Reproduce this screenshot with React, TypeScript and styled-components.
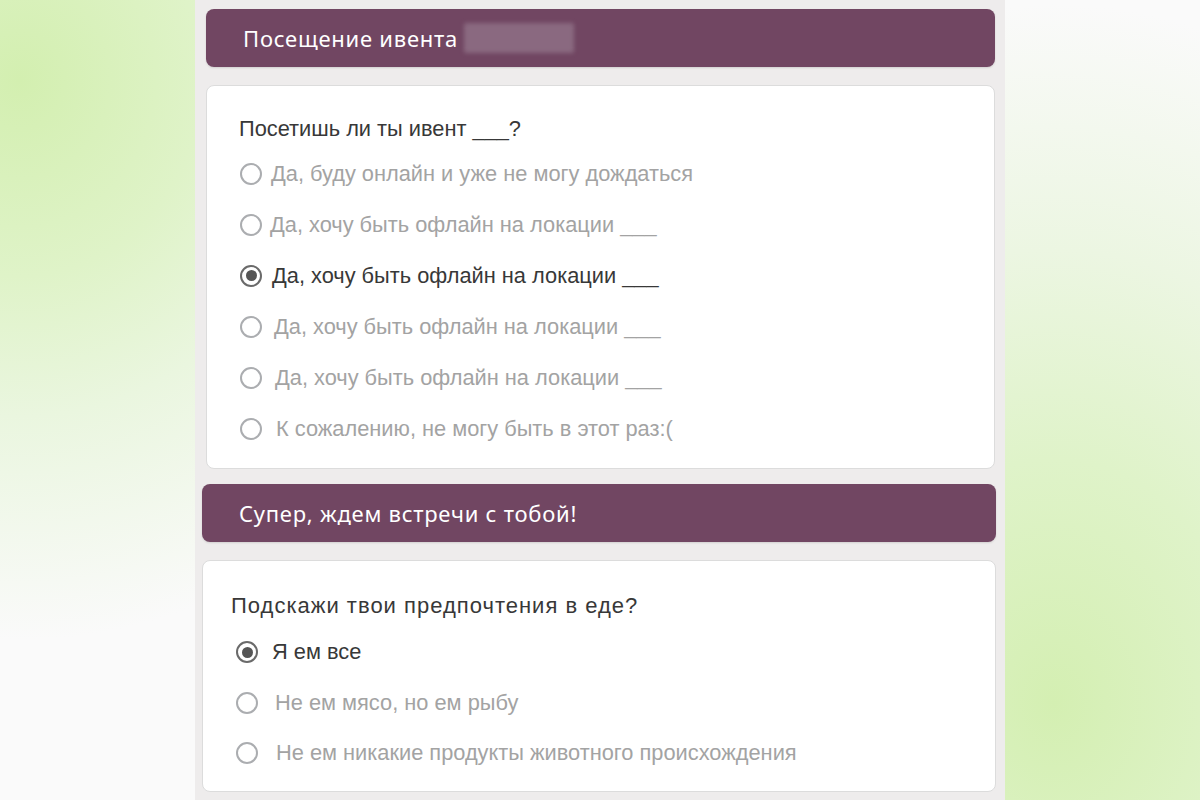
import React from "react";
import styled, { createGlobalStyle } from "styled-components";

const Global = createGlobalStyle`
  html, body { margin: 0; padding: 0; }
  body {
    width: 1200px;
    height: 800px;
    overflow: hidden;
    font-family: "Liberation Sans", Arial, sans-serif;
    background: #fafafa;
  }
`;

const Page = styled.div`
  display: grid;
  grid-template-columns: 195px 810px 1fr;
  height: 800px;
`;

const SideLeft = styled.div`
  background:
    radial-gradient(ellipse 520px 560px at 10% 10%, #d3efb0 0%, #dff3c8 35%, #eaf6df 60%, rgba(250, 250, 250, 0) 100%),
    #fafafa;
`;

const SideRight = styled.div`
  background:
    radial-gradient(ellipse 560px 700px at 25% 88%, #d4efb2 0%, #dff3c9 35%, #ecf6e2 65%, rgba(250, 250, 250, 0) 100%),
    #fafafa;
`;

const Column = styled.main`
  background: #eeecec;
  display: flex;
  flex-direction: column;
  padding-top: 9px;
`;

const Banner = styled.div<{ $left: number; $right: number; $mt: number }>`
  margin: ${(p) => p.$mt}px ${(p) => p.$right}px 0 ${(p) => p.$left}px;
  height: 58px;
  background: #714662;
  border-radius: 8px;
  box-shadow: 0 1px 2px rgba(0, 0, 0, 0.12);
  display: flex;
  align-items: center;
  padding-left: 37px;
  color: #ffffff;
  font-family: "Noto Sans", "Open Sans", sans-serif;
  font-size: 22px;
  letter-spacing: 0.75px;
`;

const Blurred = styled.span`
  display: inline-block;
  width: 110px;
  height: 30px;
  margin-left: 6px;
  background: #8a6980;
  filter: blur(2px);
  border-radius: 2px;
`;

const Card = styled.section<{ $left: number; $right: number; $mt: number; $h: number; $pt: number; $pl: number }>`
  margin: ${(p) => p.$mt}px ${(p) => p.$right}px 0 ${(p) => p.$left}px;
  height: ${(p) => p.$h}px;
  box-sizing: border-box;
  background: #ffffff;
  border: 1px solid #dcdcdc;
  border-radius: 8px;
  padding: ${(p) => p.$pt}px 0 0 ${(p) => p.$pl}px;
  display: flex;
  flex-direction: column;
`;

const Question = styled.div<{ $gap: number; $size: number; $spacing: number }>`
  font-size: ${(p) => p.$size}px;
  letter-spacing: ${(p) => p.$spacing}px;
  line-height: 26px;
  color: #383838;
  margin-bottom: ${(p) => p.$gap}px;
`;

const Option = styled.label<{ $row: number; $indent: number; $textGap: number; $selected: boolean }>`
  display: flex;
  align-items: center;
  height: ${(p) => p.$row}px;
  padding-left: ${(p) => p.$indent}px;
  gap: ${(p) => p.$textGap}px;
  font-size: 21.8px;
  color: ${(p) => (p.$selected ? "#383838" : "#a3a3a3")};
`;

const Radio = styled.span<{ $selected: boolean }>`
  width: 22px;
  height: 22px;
  box-sizing: border-box;
  border-radius: 50%;
  border: 2px solid ${(p) => (p.$selected ? "#6a6a6a" : "#abadb0")};
  display: flex;
  align-items: center;
  justify-content: center;
  flex-shrink: 0;
  &::after {
    content: "";
    display: ${(p) => (p.$selected ? "block" : "none")};
    width: 11px;
    height: 11px;
    border-radius: 50%;
    background: #555555;
  }
`;

type Opt = { text: string; selected?: boolean; shift?: number };

const first: Opt[] = [
  { text: "Да, буду онлайн и уже не могу дождаться" },
  { text: "Да, хочу быть офлайн на локации ___", shift: -1 },
  { text: "Да, хочу быть офлайн на локации ___", selected: true, shift: 1 },
  { text: "Да, хочу быть офлайн на локации ___", shift: 3 },
  { text: "Да, хочу быть офлайн на локации ___", shift: 4 },
  { text: "К сожалению, не могу быть в этот раз:(", shift: 5 },
];

const second: Opt[] = [
  { text: "Я ем все", selected: true },
  { text: "Не ем мясо, но ем рыбу", shift: 3 },
  { text: "Не ем никакие продукты животного происхождения", shift: 4 },
];

export default function App() {
  return (
    <>
      <Global />
      <Page>
        <SideLeft />
        <Column>
          <Banner $left={11} $right={10} $mt={0}>
            Посещение ивента <Blurred />
          </Banner>
          <Card $left={11} $right={10} $mt={18} $h={384} $pt={30} $pl={32}>
            <Question $gap={6} $size={21.8} $spacing={0}>Посетишь ли ты ивент ___?</Question>
            {first.map((o, i) => (
              <Option key={i} $row={51} $indent={1} $textGap={9 + (o.shift || 0)} $selected={!!o.selected}>
                <Radio $selected={!!o.selected} />
                {o.text}
              </Option>
            ))}
          </Card>
          <Banner $left={7} $right={9} $mt={15}>
            Супер, ждем встречи с тобой!
          </Banner>
          <Card $left={7} $right={9} $mt={18} $h={232} $pt={32} $pl={28}>
            <Question $gap={8} $size={22} $spacing={1}>Подскажи твои предпочтения в еде?</Question>
            {second.map((o, i) => (
              <Option key={i} $row={50.5} $indent={5} $textGap={14 + (o.shift || 0)} $selected={!!o.selected}>
                <Radio $selected={!!o.selected} />
                {o.text}
              </Option>
            ))}
          </Card>
        </Column>
        <SideRight />
      </Page>
    </>
  );
}
